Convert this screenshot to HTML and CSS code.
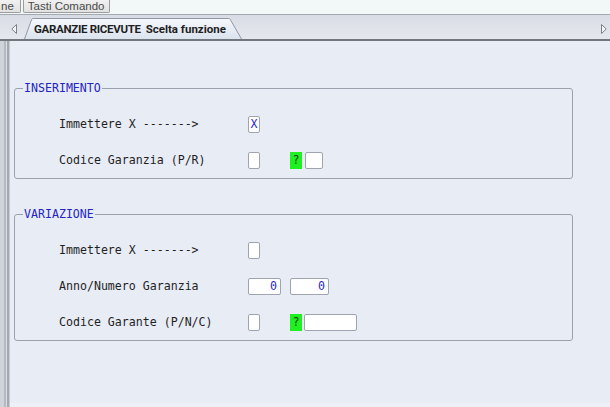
FILE: index.html
```html
<!DOCTYPE html>
<html lang="it">
<head>
<meta charset="utf-8">
<title>Garanzie ricevute</title>
<link rel="stylesheet" href="styles.css">
</head>
<body>
<div class="topbar">
  <span class="tbtn tbtn-cut">ne</span>
  <span class="tbtn">Tasti Comando</span>
</div>
<div class="tabstrip">
  <span class="arrow arrow-left">
    <svg width="6" height="10" viewBox="0 0 6 10"><path d="M5.5 0.5 L0.8 5 L5.5 9.5 Z" fill="#f4f6f9" stroke="#7c8088" stroke-width="1"/></svg>
  </span>
  <div class="tab">
    <svg class="tab-shape" width="218" height="21" viewBox="0 0 218 21">
      <defs>
        <linearGradient id="tg" x1="0" y1="0" x2="0" y2="1">
          <stop offset="0" stop-color="#f6f8fc"/>
          <stop offset="1" stop-color="#dbe3ee"/>
        </linearGradient>
      </defs>
      <path d="M0.5 21 L7.6 1.6 Q8 0.5 9.2 0.5 L204.5 0.5 Q205.8 0.5 206.3 1.6 L217.5 21" fill="url(#tg)" stroke="#8f98a4" stroke-width="1"/>
    </svg>
    <span class="tab-label"><span class="caps">GARANZIE RICEVUTE</span> <span class="lower">Scelta funzione</span></span>
  </div>
  <span class="tab-fill"></span>
  <span class="arrow arrow-right">
    <svg width="6" height="10" viewBox="0 0 6 10"><path d="M0.5 0.5 L5.2 5 L0.5 9.5 Z" fill="#f4f6f9" stroke="#7c8088" stroke-width="1"/></svg>
  </span>
</div>
<div class="main">
  <div class="frame"></div>
  <div class="content">
    <fieldset class="group">
      <legend>INSERIMENTO</legend>
      <div class="rows">
        <div class="row">
          <span class="lbl">Immettere X -------&gt;</span>
          <div class="fields"><span class="fld w12 center">X</span></div>
        </div>
        <div class="row">
          <span class="lbl">Codice Garanzia (P/R)</span>
          <div class="fields">
            <span class="fld w12"></span>
            <span class="help">?</span>
            <span class="fld w18 near"></span>
          </div>
        </div>
      </div>
    </fieldset>
    <fieldset class="group group-second">
      <legend>VARIAZIONE</legend>
      <div class="rows">
        <div class="row">
          <span class="lbl">Immettere X -------&gt;</span>
          <div class="fields"><span class="fld w12 center"></span></div>
        </div>
        <div class="row">
          <span class="lbl">Anno/Numero Garanzia</span>
          <div class="fields">
            <span class="fld w33 num">0</span>
            <span class="fld w39 num gap9">0</span>
          </div>
        </div>
        <div class="row">
          <span class="lbl">Codice Garante (P/N/C)</span>
          <div class="fields">
            <span class="fld w12"></span>
            <span class="help">?</span>
            <span class="fld w53 near2"></span>
          </div>
        </div>
      </div>
    </fieldset>
  </div>
</div>
</body>
</html>
```
FILE: styles.css
```css
* { box-sizing: border-box; }
html, body { margin: 0; padding: 0; }
body {
  width: 610px;
  height: 407px;
  overflow: hidden;
  background: #e8ecf5;
  font-family: "Liberation Sans", Arial, sans-serif;
  display: flex;
  flex-direction: column;
}

/* top button bar */
.topbar {
  height: 14px;
  flex: none;
  background: #f2f7f8;
  display: flex;
  align-items: flex-start;
  gap: 2px;
}
.tbtn {
  height: 13px;
  padding: 0 4px;
  border: 1px solid #9c9c9c;
  border-top: none;
  border-radius: 0 0 2px 2px;
  background: linear-gradient(#f0f0f0, #e2e2e2);
  color: #4a4a4a;
  font-size: 11.5px;
  line-height: 12px;
  white-space: nowrap;
}
.tbtn-cut {
  border-left: none;
  padding: 0 6px 0 1px;
  border-radius: 0 0 2px 0;
}

/* tab strip */
.tabstrip {
  height: 27px;
  flex: none;
  display: flex;
  align-items: flex-end;
  border-top: 1px solid #a3a8ae;
  border-bottom: 2px solid #72777d;
  background: linear-gradient(#d8dce4, #e5e8ee);
}
.arrow {
  align-self: center;
  display: flex;
  margin-top: 3px;
}
.arrow-left { margin-left: 11px; }
.arrow-right { margin-right: 3px; }
.tab {
  margin-left: 7px;
  display: grid;
  height: 21px;
}
.tab-shape, .tab-label { grid-area: 1 / 1; }
.tab-label {
  padding-left: 10px;
  align-self: center;
  font-family: Roboto, "Liberation Sans", sans-serif;
  font-weight: 700;
  font-size: 11.5px;
  color: #1e1e1e;
  white-space: pre;
  margin-top: 1px;
}
.caps { letter-spacing: -0.3px; }
.lower { letter-spacing: 0; margin-left: 2px; }
.tab-fill { flex: 1; }

/* main area */
.main {
  flex: 1;
  display: flex;
  min-height: 0;
}
.frame {
  width: 10px;
  flex: none;
  background: linear-gradient(to right,
    #cfd3da 0 4px, #b4b9c2 4px 6px, #dadde3 6px 7px,
    #a3a8b1 7px 9px, #c7ccd4 9px 10px);
}
.content {
  flex: 1;
  padding: 41px 0 0 4px;
  background: #e8ecf5;
  border-bottom: 4px solid #edf0f7;
}

/* groups */
.group {
  width: 559px;
  margin: 0;
  padding: 0;
  border: 1px solid #9ba1ac;
  border-radius: 3px;
  min-width: 0;
}
.group-second { margin-top: 29px; }
.group legend {
  margin-left: 8px;
  padding: 0 1px;
  font-family: "DejaVu Sans Mono", "Liberation Mono", monospace;
  font-size: 11.6px;
  line-height: 13px;
  color: #2424c4;
}
.rows {
  margin-top: 11px;
  padding-left: 44px;
}
.row {
  height: 36px;
  display: grid;
  grid-template-columns: 189px auto;
  align-items: center;
}
.lbl {
  font-family: "DejaVu Sans Mono", "Liberation Mono", monospace;
  font-size: 11.6px;
  color: #1f1f1f;
  white-space: pre;
}
.fields {
  display: flex;
  align-items: center;
}
.fld {
  height: 17px;
  background: #fff;
  border: 1px solid #9ea5b0;
  border-radius: 2px;
  font-family: "DejaVu Sans Mono", "Liberation Mono", monospace;
  font-size: 11.6px;
  line-height: 15px;
  color: #2a2ad2;
}
.center { text-align: center; }
.num { text-align: right; padding-right: 3px; }
.w12 { width: 12px; }
.w18 { width: 18px; }
.w33 { width: 33px; }
.w39 { width: 39px; }
.w53 { width: 53px; }
.gap9 { margin-left: 9px; }
.near { margin-left: 3px; }
.near2 { margin-left: 2px; }
.help {
  width: 12px;
  height: 17px;
  margin-left: 30px;
  background: #1ff01f;
  font-family: "DejaVu Sans Mono", "Liberation Mono", monospace;
  font-size: 11.6px;
  line-height: 17px;
  text-align: center;
  color: #1a3a1a;
}
```
